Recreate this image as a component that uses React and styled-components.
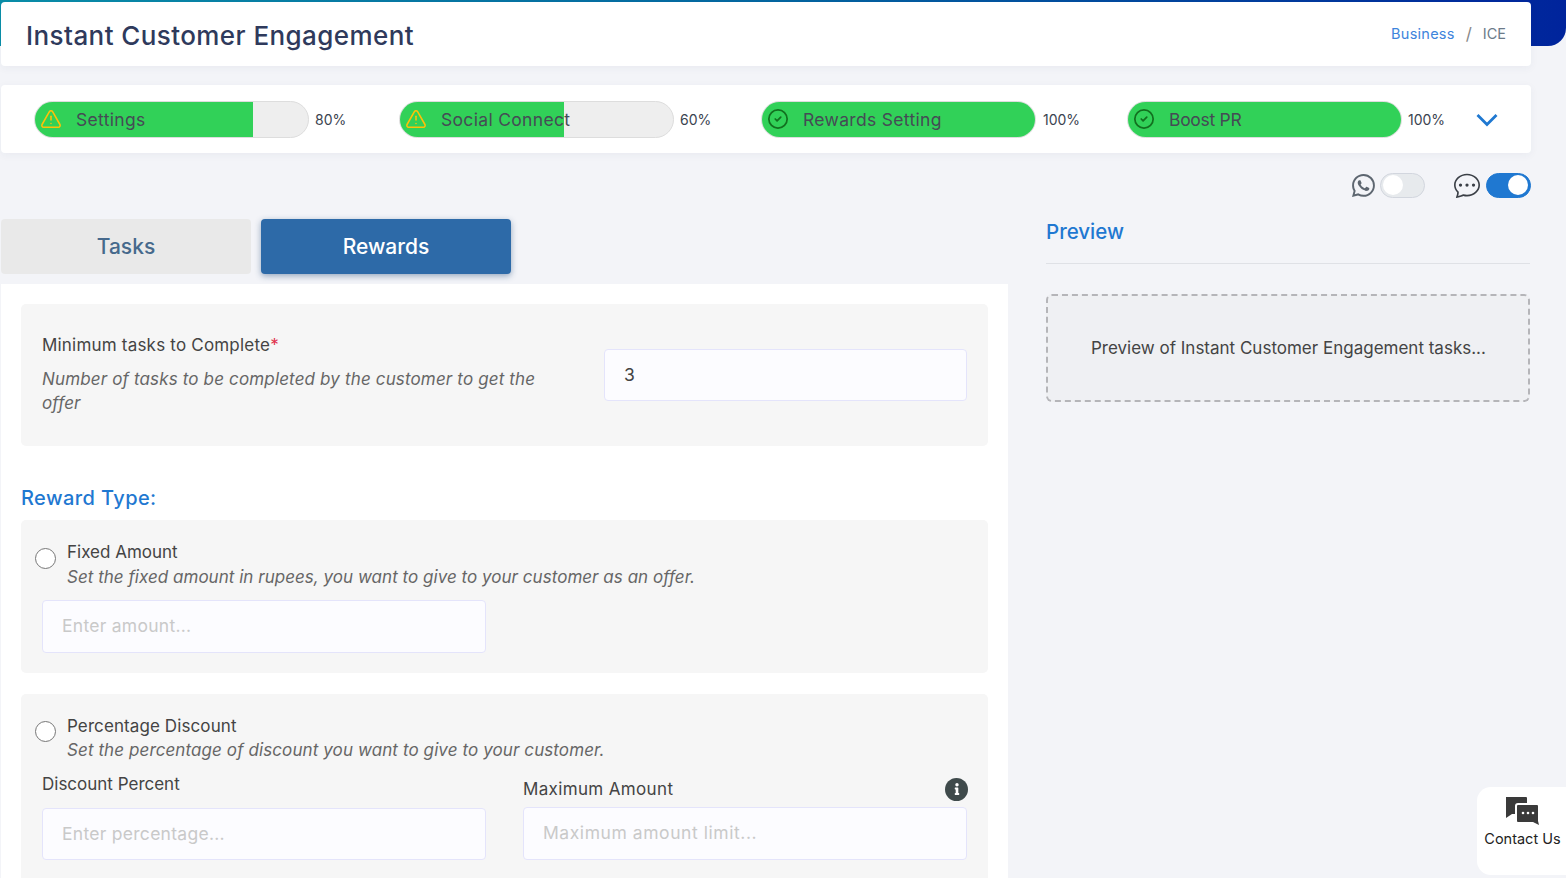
import React from 'react';
import styled, { createGlobalStyle } from 'styled-components';
import { TriangleAlert, CircleCheck } from 'lucide-react';
import { BsWhatsapp, BsChatDots } from 'react-icons/bs';
import { FaInfo } from 'react-icons/fa';

const Global = createGlobalStyle`
  html, body { margin: 0; padding: 0; background: #f3f4f8; }
  body { font-family: "Inter", "Noto Sans", sans-serif; color: #444; }
  * { box-sizing: border-box; }
  input::placeholder { color: #c9c9c9; opacity: 1; }
`;

const Page = styled.div`
  position: relative;
  width: 1566px;
  height: 878px;
  overflow: hidden;
  padding: 2px 35px 0 1px;
`;
const TopBand = styled.div`
  position: absolute;
  inset: 0 0 auto 0;
  height: 46px;
  background: linear-gradient(90deg, #0a8ea8 0%, #0466a0 50%, #00249c 100%);
  border-bottom-right-radius: 18px;
`;
const HeaderCard = styled.header`
  position: relative;
  height: 64px;
  background: #fff;
  border-radius: 4px;
  box-shadow: 0 2px 8px rgba(40, 50, 90, 0.05);
  display: flex;
  align-items: center;
  justify-content: space-between;
  padding: 0 25px;
`;
const Title = styled.h1`
  margin: 2px 0 0;
  font-size: 26px;
  font-weight: 500;
  color: #2f3a5c;
  letter-spacing: 0.42px;
`;
const Crumbs = styled.nav`
  display: flex;
  align-items: center;
  font-size: 14.5px;
  margin-top: -1px;
`;
const CrumbLink = styled.span`color: #3d84dc; letter-spacing: 0.25px;`;
const CrumbSep = styled.span`color: #888; margin: 0 11px; font-size: 17px;`;
const CrumbCurrent = styled.span`color: #6c7a89;`;

const ProgressCard = styled.section`
  height: 68px;
  margin-top: 19px;
  background: #fff;
  border-radius: 4px;
  box-shadow: 0 2px 8px rgba(40, 50, 90, 0.05);
  display: flex;
  align-items: center;
  padding-left: 33px;
`;
const ProgressItem = styled.div`
  width: ${p => p.$w}px;
  display: flex;
  align-items: center;
  gap: ${p => p.$gap}px;
`;
const Track = styled.div`
  position: relative;
  width: 275px;
  height: 37px;
  border-radius: 19px;
  border: 1px solid #ddd;
  background: #eee;
  overflow: hidden;
  display: flex;
  align-items: center;
  padding-left: 5px;
`;
const Fill = styled.div`
  position: absolute;
  inset: 0 auto 0 0;
  background: #31d158;
`;
const StepIcon = styled.span`
  position: relative;
  display: flex;
  justify-content: center;
  width: 22px;
  color: ${p => p.$done ? '#12701f' : '#ffc107'};
`;
const StepName = styled.span`
  position: relative;
  margin-left: 14px;
  font-size: 17.5px;
  color: #454b55;
  letter-spacing: ${p => p.$ls}px;
`;
const Percent = styled.span`
  font-size: 14px;
  color: #3b4350;
`;
const Chevron = styled.svg`
  display: block;
  margin-top: 2px;
  color: #1f78d1;
`;

const ToggleRow = styled.div`
  height: 26px;
  margin-top: 19px;
  display: flex;
  justify-content: flex-end;
  align-items: center;
  gap: 29px;
`;
const ToggleGroup = styled.div`
  display: flex;
  align-items: center;
  gap: ${p => p.$g}px;
`;
const ChannelIcon = styled.span`
  display: flex;
  color: ${p => p.$c};
`;
const Switch = styled.span`
  display: flex;
  align-items: center;
  width: 45px;
  height: 25px;
  padding: 2px;
  border-radius: 13px;
  justify-content: ${p => p.$on ? 'flex-end' : 'flex-start'};
  background: ${p => p.$on ? '#1f78d1' : '#e7eaed'};
  border: 1px solid ${p => p.$on ? '#1f78d1' : '#d2d6de'};
`;
const Knob = styled.span`
  width: 20px;
  height: 20px;
  border-radius: 50%;
  background: #fff;
`;

const Columns = styled.div`
  display: grid;
  grid-template-columns: 1007px 484px;
  column-gap: 38px;
  margin-top: 21px;
`;
const LeftCol = styled.div``;
const Tabs = styled.div`
  display: flex;
  gap: 10px;
`;
const Tab = styled.button`
  width: 250px;
  height: 55px;
  border: 0;
  border-radius: 4px;
  font-family: inherit;
  font-size: 21px;
  font-weight: 500;
  background: ${p => p.$active ? '#2d6aa8' : '#e9e9e9'};
  color: ${p => p.$active ? '#fff' : '#46698c'};
  box-shadow: ${p => p.$active ? '0 2px 6px rgba(30, 70, 120, 0.45)' : 'none'};
`;
const Panel = styled.div`
  margin-top: 10px;
  height: 620px;
  background: #fff;
  padding: 20px;
`;
const Block = styled.div`
  background: #f6f6f6;
  border-radius: 5px;
  height: ${p => p.$h}px;
  padding: ${p => p.$pad};
  margin-top: ${p => p.$mt || 0}px;
`;
const MinGrid = styled.div`
  display: grid;
  grid-template-columns: 562px 363px;
`;
const FieldLabel = styled.div`
  font-size: 17px;
  line-height: 24px;
  color: #444;
  letter-spacing: ${p => p.$ls || 0}px;
`;
const Req = styled.span`color: #e0314b;`;
const Hint = styled.div`
  font-size: 17px;
  line-height: 24px;
  font-style: italic;
  color: #666;
  letter-spacing: ${p => p.$ls || 0}px;
  margin-top: ${p => p.$mt || 0}px;
`;
const MinHint = styled(Hint)`
  width: 510px;
`;
const TextInput = styled.input`
  display: block;
  width: ${p => p.$w}px;
  height: ${p => p.$h || 52}px;
  background: #fcfcff;
  border: 1px solid #e4e4fb;
  border-radius: 4px;
  padding: 0 19px 2px;
  font-family: inherit;
  font-size: 17.5px;
  color: #444;
  outline: none;
  &::placeholder { letter-spacing: ${p => p.$ph || 0}px; }
`;
const MinInput = styled(TextInput)`
  margin-top: 16px;
`;
const SectionTitle = styled.h2`
  margin: 40px 0 10px;
  height: 24px;
  line-height: 24px;
  font-size: 20px;
  font-weight: 500;
  color: #1f78d1;
  letter-spacing: 0.42px;
`;
const RadioRow = styled.div`
  display: grid;
  grid-template-columns: 21px 1fr;
  column-gap: 11px;
`;
const Radio = styled.span`
  width: 21px;
  height: 21px;
  margin-top: ${p => p.$mt}px;
  border-radius: 50%;
  background: #fff;
  border: 1.5px solid #777;
`;
const OptionBody = styled.div``;
const Indented = styled.div`
  padding-left: 7px;
`;
const AmountInput = styled(TextInput)`
  margin-top: 11px;
`;
const PercentGrid = styled.div`
  display: grid;
  grid-template-columns: 444px 444px;
  column-gap: 37px;
  padding-left: 7px;
  margin-top: 10px;
`;
const PercentCell = styled.div`
  display: flex;
  flex-direction: column;
  justify-content: flex-end;
  height: 88px;
`;
const LabelRow = styled.div`
  display: flex;
  justify-content: space-between;
  align-items: center;
  margin-bottom: ${p => p.$mb}px;
`;
const InfoDot = styled.span`
  width: 23px;
  height: 23px;
  margin-right: -1px;
  border-radius: 50%;
  background: #3f4a4b;
  color: #fff;
  display: flex;
  align-items: center;
  justify-content: center;
  font-size: 12px;
`;

const RightCol = styled.aside``;
const PreviewTitle = styled.h2`
  margin: 0;
  height: 45px;
  padding-top: 1px;
  line-height: 24px;
  font-size: 20.5px;
  font-weight: 500;
  color: #1f78d1;
  border-bottom: 1px solid #dfe1e6;
`;
const PreviewBox = styled.div`
  margin-top: 30px;
  height: 108px;
  border: 2px dashed #b5b5b9;
  border-radius: 6px;
  background: #eff0f3;
  display: flex;
  align-items: center;
  padding-left: 43px;
  font-size: 17px;
  color: #444;
`;
const Contact = styled.div`
  position: absolute;
  right: 0;
  top: 787px;
  width: 89px;
  height: 88px;
  background: #fff;
  border-radius: 14px 0 0 14px;
  display: flex;
  flex-direction: column;
  align-items: center;
  padding-top: 9px;
  font-size: 14.5px;
  color: #222;
`;
const ContactText = styled.span`
  margin-top: 4px;
  margin-left: 2px;
  white-space: nowrap;
`;

const steps = [
  { name: 'Settings', pct: 80, w: 365, gap: 6, ls: 0.32 },
  { name: 'Social Connect', pct: 60, w: 362, gap: 6, ls: 0.32 },
  { name: 'Rewards Setting', pct: 100, w: 366, gap: 7, ls: 0.32 },
  { name: 'Boost PR', pct: 100, w: 349, gap: 6, ls: -0.3 },
];

const ContactIcon = () => (
  <svg width="36" height="30" viewBox="0 0 36 30">
    <path d="M2 1h20a1 1 0 0 1 1 1v5h-9a3 3 0 0 0-3 3v8H8l-6 4z" fill="#3a3a3a" />
    <path d="M14 9h19a1 1 0 0 1 1 1v15l1 4-6-3H14a1 1 0 0 1-1-1V10a1 1 0 0 1 1-1z" fill="#3a3a3a" />
    <circle cx="19" cy="17" r="1.3" fill="#fff" />
    <circle cx="24" cy="17" r="1.3" fill="#fff" />
    <circle cx="29" cy="17" r="1.3" fill="#fff" />
  </svg>
);

export default function App() {
  return (
    <>
      <Global />
      <Page>
        <TopBand />
        <HeaderCard>
          <Title>Instant Customer Engagement</Title>
          <Crumbs>
            <CrumbLink>Business</CrumbLink>
            <CrumbSep>/</CrumbSep>
            <CrumbCurrent>ICE</CrumbCurrent>
          </Crumbs>
        </HeaderCard>

        <ProgressCard>
          {steps.map(s => (
            <ProgressItem key={s.name} $w={s.w} $gap={s.gap}>
              <Track>
                <Fill style={{ width: `${s.pct}%` }} />
                <StepIcon $done={s.pct === 100}>
                  {s.pct === 100
                    ? <CircleCheck size={26} strokeWidth={1.9} />
                    : <TriangleAlert size={26} strokeWidth={1.7} />}
                </StepIcon>
                <StepName $ls={s.ls}>{s.name}</StepName>
              </Track>
              <Percent>{s.pct}%</Percent>
            </ProgressItem>
          ))}
          <Chevron width="22" height="14" viewBox="0 0 22 14" fill="none" stroke="currentColor" strokeWidth="2.8">
            <path d="M1.5 2 L11 11.5 L20.5 2" />
          </Chevron>
        </ProgressCard>

        <ToggleRow>
          <ToggleGroup $g={5}>
            <ChannelIcon $c="#5d6670"><BsWhatsapp size={23} /></ChannelIcon>
            <Switch><Knob /></Switch>
          </ToggleGroup>
          <ToggleGroup $g={6}>
            <ChannelIcon $c="#3a3f46"><BsChatDots size={26} /></ChannelIcon>
            <Switch $on><Knob /></Switch>
          </ToggleGroup>
        </ToggleRow>

        <Columns>
          <LeftCol>
            <Tabs>
              <Tab>Tasks</Tab>
              <Tab $active>Rewards</Tab>
            </Tabs>
            <Panel>
              <Block $h={142} $pad="29px 21px 21px">
                <MinGrid>
                  <div>
                    <FieldLabel $ls={0.2}>Minimum tasks to Complete<Req>*</Req></FieldLabel>
                    <MinHint $ls={0.15} $mt={10}>Number of tasks to be completed by the customer to get the offer</MinHint>
                  </div>
                  <MinInput $w={363} defaultValue="3" readOnly />
                </MinGrid>
              </Block>

              <SectionTitle>Reward Type:</SectionTitle>
              <Block $h={153} $pad="20px 14px">
                <RadioRow>
                  <Radio $mt={8} />
                  <OptionBody>
                    <FieldLabel>Fixed Amount</FieldLabel>
                    <Hint $ls={0.03} $mt={1}>Set the fixed amount in rupees, you want to give to your customer as an offer.</Hint>
                  </OptionBody>
                </RadioRow>
                <Indented>
                  <AmountInput $w={444} $h={53} $ph={0.27} placeholder="Enter amount..." readOnly />
                </Indented>
              </Block>

              <Block $h={300} $pad="20px 14px" $mt={21}>
                <RadioRow>
                  <Radio $mt={7} />
                  <OptionBody>
                    <FieldLabel $ls={0.1}>Percentage Discount</FieldLabel>
                    <Hint $ls={0.1}>Set the percentage of discount you want to give to your customer.</Hint>
                  </OptionBody>
                </RadioRow>
                <PercentGrid>
                  <PercentCell>
                    <LabelRow $mb={12}><FieldLabel>Discount Percent</FieldLabel></LabelRow>
                    <TextInput $w={444} $ph={0.28} placeholder="Enter percentage..." readOnly />
                  </PercentCell>
                  <PercentCell>
                    <LabelRow $mb={6}>
                      <FieldLabel $ls={0.35}>Maximum Amount</FieldLabel>
                      <InfoDot><FaInfo /></InfoDot>
                    </LabelRow>
                    <TextInput $w={444} $h={53} $ph={0.56} placeholder="Maximum amount limit..." readOnly />
                  </PercentCell>
                </PercentGrid>
              </Block>
            </Panel>
          </LeftCol>
          <RightCol>
            <PreviewTitle>Preview</PreviewTitle>
            <PreviewBox>Preview of Instant Customer Engagement tasks...</PreviewBox>
          </RightCol>
        </Columns>

        <Contact>
          <ContactIcon />
          <ContactText>Contact Us</ContactText>
        </Contact>
      </Page>
    </>
  );
}
